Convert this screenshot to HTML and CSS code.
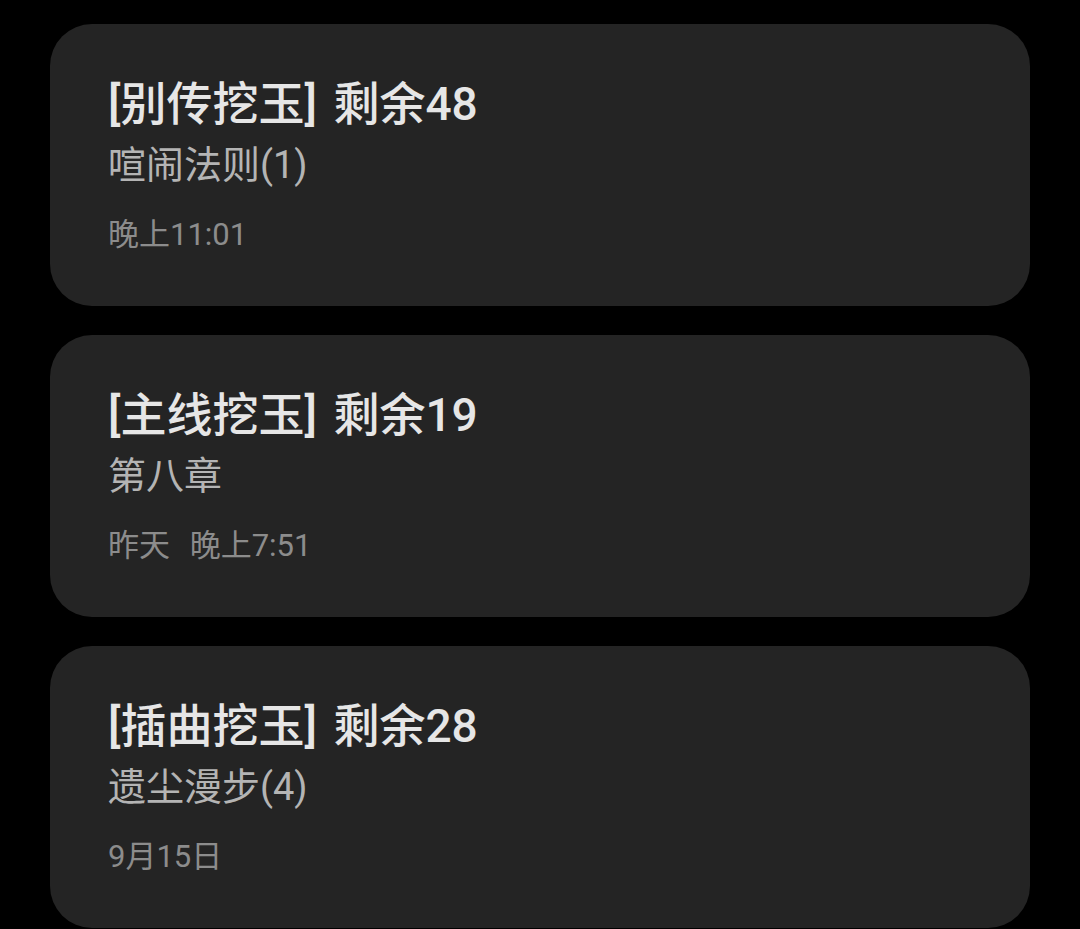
FILE: index.html
```html
<!DOCTYPE html>
<html lang="zh-CN">
<head>
<meta charset="utf-8">
<link rel="stylesheet" href="styles.css">
</head>
<body>
<div class="list">
  <div class="card">
    <div class="title">[别传挖玉] 剩余48</div>
    <div class="sub">喧闹法则(1)</div>
    <div class="time">晚上11:01</div>
  </div>
  <div class="card">
    <div class="title">[主线挖玉] 剩余19</div>
    <div class="sub">第八章</div>
    <div class="time">昨天 晚上7:51</div>
  </div>
  <div class="card">
    <div class="title">[插曲挖玉] 剩余28</div>
    <div class="sub">遗尘漫步(4)</div>
    <div class="time">9月15日</div>
  </div>
</div>
</body>
</html>
```
FILE: styles.css
```css
html, body {
  margin: 0;
  padding: 0;
  background: #000;
}
body {
  font-family: Roboto, "Noto Sans CJK SC", sans-serif;
  width: 1080px;
  height: 929px;
  overflow: hidden;
}
.list {
  display: flex;
  flex-direction: column;
  gap: 29px;
  padding: 24px 50px 0 50px;
}
.card {
  background: #242424;
  border-radius: 42px;
  height: 282px;
  box-sizing: border-box;
  padding: 50px 58px 0 58px;
  display: flex;
  flex-direction: column;
}
.title {
  font-size: 46px;
  line-height: 60px;
  font-weight: 500;
  word-spacing: 5px;
  color: #e6e6e6;
  white-space: pre;
}
.sub {
  font-size: 38px;
  line-height: 62px;
  color: #b4b4b4;
}
.time {
  font-size: 31px;
  line-height: 44px;
  margin-top: 17px;
  word-spacing: 12px;
  color: #8c8c8c;
}
```
